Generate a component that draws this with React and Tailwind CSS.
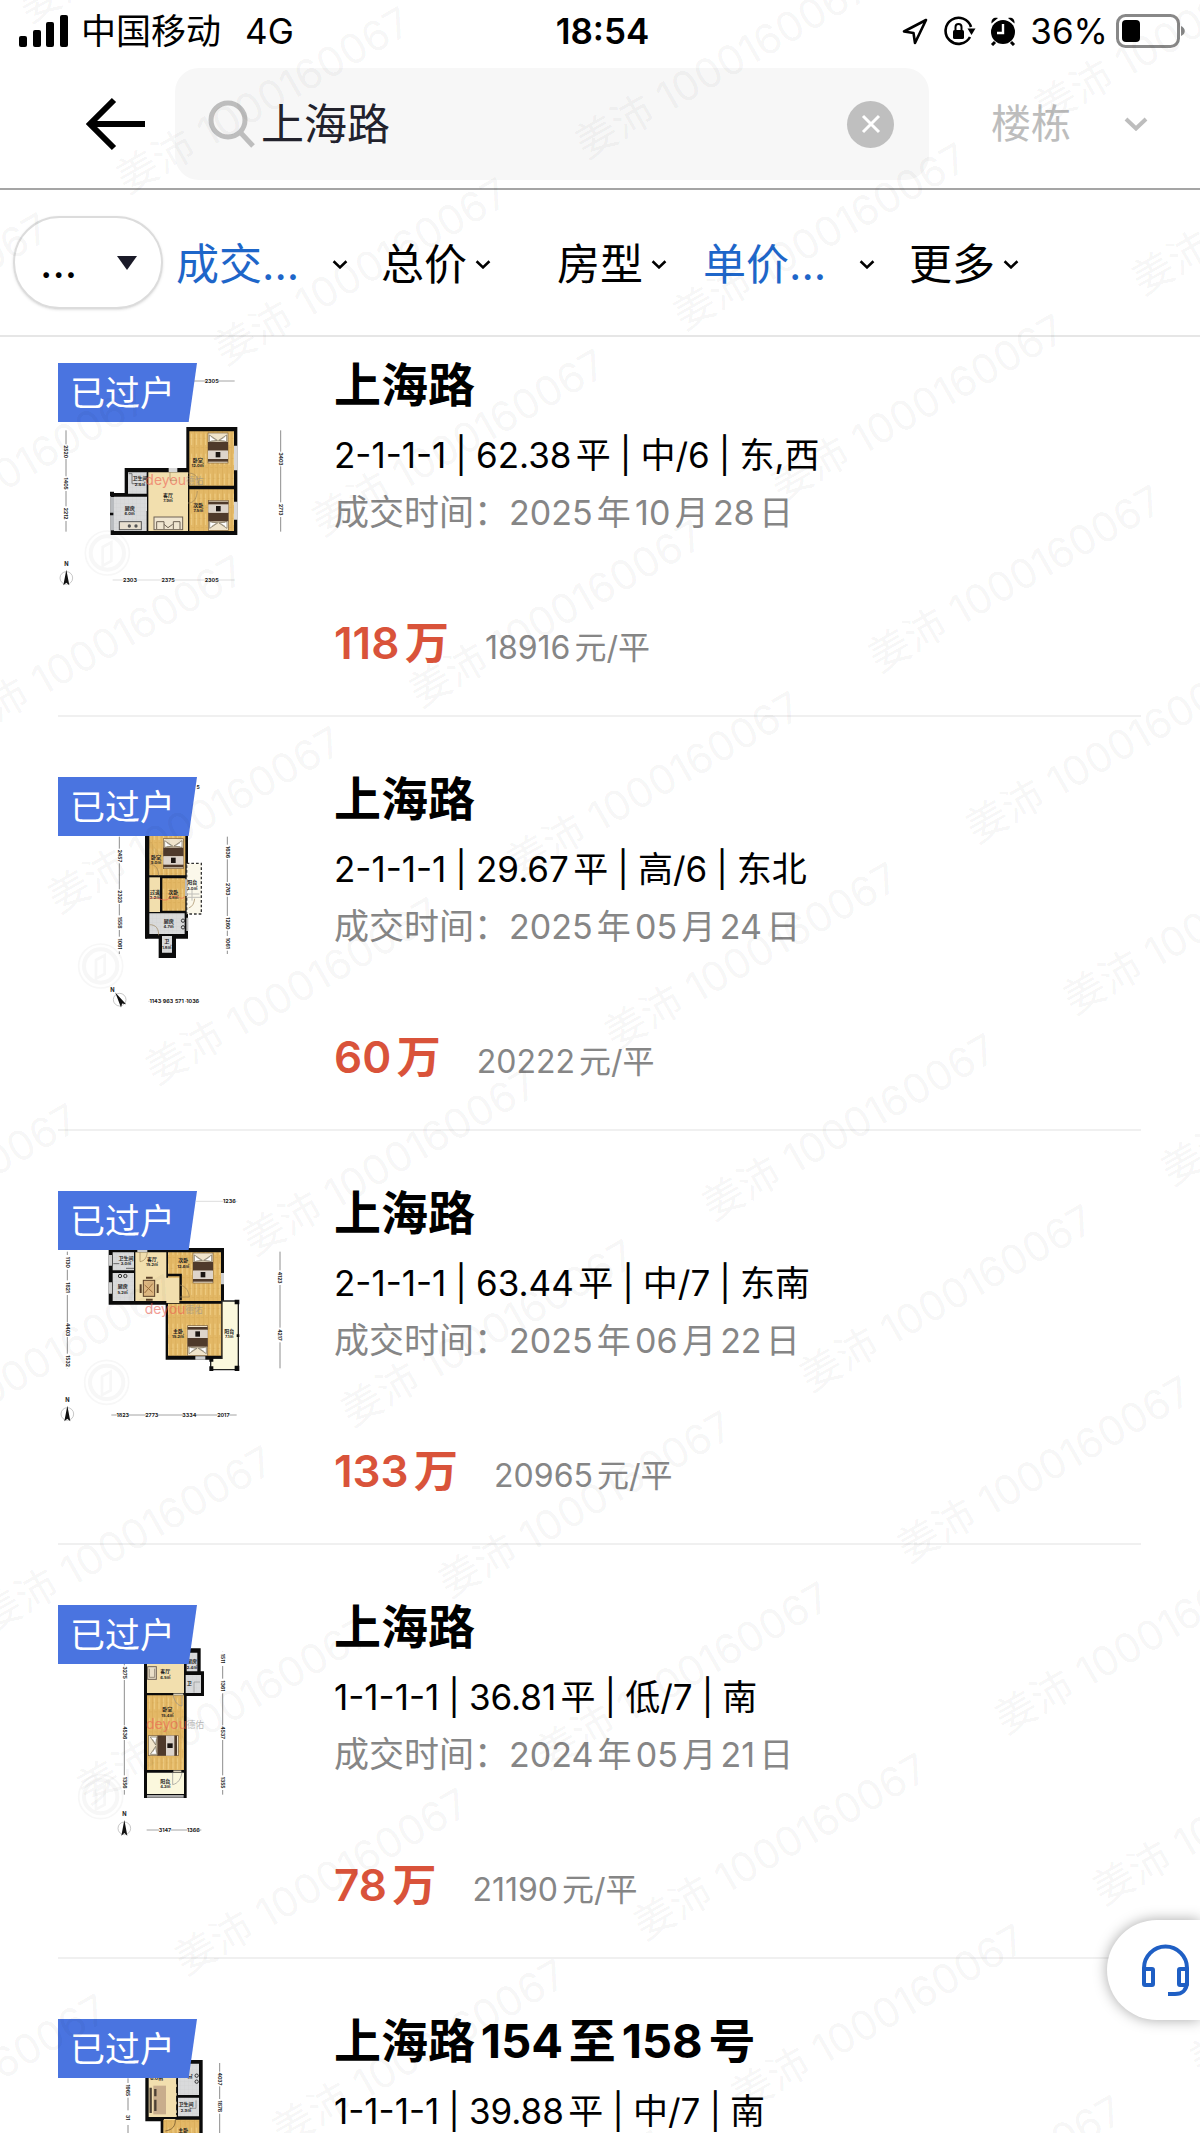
import React from "react";

const INK = "#0b0b0b";

function Chevron({ className }) {
  return (
    <svg viewBox="0 0 24 14" fill="none" stroke="currentColor" strokeWidth="4" className={className} aria-hidden="true">
      <path d="M2 2l10 9.5L22 2" />
    </svg>
  );
}

/* ---------- floor plan drawings ---------- */

function Defs({ id }) {
  return (
    <defs>
      <pattern id={`wood-${id}`} width="14" height="60" patternUnits="userSpaceOnUse">
        <rect width="14" height="60" fill="#e3b866" />
        <path d="M0 0v60" stroke="#cf9d49" strokeWidth="2" />
        <path d="M7 8v34" stroke="#efcd84" strokeWidth="3" />
        <path d="M0 22h7M7 50h7" stroke="#cf9d49" strokeWidth="1" />
      </pattern>
      <pattern id={`tile-${id}`} width="12" height="12" patternUnits="userSpaceOnUse">
        <rect width="12" height="12" fill="#d9dadb" />
        <path d="M0 0h12M0 0v12" stroke="#c4c7c9" strokeWidth="1" />
      </pattern>
    </defs>
  );
}

/* pillow end sits at the top; flip turns it round, side lays it on its left */
function Bed({ x, y, flip, side }) {
  const t = flip ? "rotate(180 30 45)" : side ? "rotate(-90 30 30)" : undefined;
  return (
    <g transform={`translate(${x} ${y})`}>
      <g transform={t}>
        <rect width="60" height="90" fill="#f0e4cb" stroke="#7a5f3c" strokeWidth="2" />
        <path d="M4 6l24 16L4 26zM56 6L32 22l24 4z" fill="#fff" stroke="#6d6350" strokeWidth="2" />
        <path d="M10 12l14 9M50 12l-14 9M10 24h40" stroke="#8f846d" strokeWidth="2" />
        <rect y="27" width="60" height="26" fill="#4f3a2b" />
        <rect y="53" width="60" height="25" fill="#ddd4cb" />
        <rect x="23" y="57" width="14" height="16" fill="#1b1512" />
        <rect y="78" width="60" height="8" fill="#4f3a2b" />
      </g>
    </g>
  );
}

function Mark({ x, y, children, size = 15, turn = 0 }) {
  return (
    <text
      x={x}
      y={y}
      fontSize={size}
      fontWeight="700"
      textAnchor="middle"
      fill="#222"
      transform={turn ? `rotate(${turn} ${x} ${y})` : undefined}
    >
      {children}
    </text>
  );
}

function Room({ x, y, name, area }) {
  return (
    <g>
      <Mark x={x} y={y}>{name}</Mark>
      <Mark x={x} y={y + 16} size={12}>{area}</Mark>
    </g>
  );
}

function DimV({ x, y1, y2, marks }) {
  return (
    <g>
      <path d={`M${x} ${y1}V${y2}`} stroke="#555" strokeWidth="2" />
      {marks.map(([y, label]) => (
        <g key={y}>
          <rect x={x - 8} y={y - 22} width="16" height="44" fill="#fff" />
          <Mark x={x - 5} y={y} turn={90}>{label}</Mark>
        </g>
      ))}
    </g>
  );
}

function DimH({ y, x1, x2, marks, tone = "#777" }) {
  return (
    <g>
      <path d={`M${x1} ${y}H${x2}`} stroke={tone} strokeWidth="2" />
      {marks.map(([x, label]) => (
        <g key={x}>
          <rect x={x - 18} y={y - 8} width="36" height="16" fill="#fff" />
          <Mark x={x} y={y + 6} size={16}>{label}</Mark>
        </g>
      ))}
    </g>
  );
}

function Compass({ x, y, turn = 0, nx = 0, ny = -36 }) {
  return (
    <g>
      <Mark x={x + nx} y={y + ny} size={17}>N</Mark>
      <circle cx={x} cy={y} r="19" fill="none" stroke="#aaa" strokeWidth="2" />
      <path d="M0 -25L9 22L0 14L-9 22Z" fill="#111" transform={`translate(${x} ${y}) rotate(${turn})`} />
    </g>
  );
}

function Seal({ x, y }) {
  return (
    <g fill="none" stroke="#f7f7f7">
      <circle cx={x} cy={y} r="66" strokeWidth="5" />
      <circle cx={x} cy={y} r="50" strokeWidth="12" />
      <path d={`M${x - 14} ${y - 18}l26 -14v56l-26 14z`} fill="#fff" strokeWidth="8" />
    </g>
  );
}

function Brand({ x, y }) {
  return (
    <g opacity="0.6">
      <text x={x} y={y} fontSize="42" fill="#ee5f52">deyou</text>
      <text x={x + 122} y={y - 2} fontSize="26" fill="#8c8c8c">德佑</text>
    </g>
  );
}

function Plan({ id, top, children }) {
  return (
    <svg
      viewBox={`54 ${top} 720 696`}
      className="h-[232px] w-[240px] font-['Inter','Noto_Sans_CJK_SC',sans-serif]"
      role="img"
      aria-label="户型图"
    >
      <Defs id={id} />
      {children}
    </svg>
  );
}

function PlanA() {
  return (
    <Plan id="a" top={36}>
      <Seal x={202} y={606} />
      <path d="M439 228H592V552H212V426H254V351H439Z" fill={INK} />
      <path d="M448 241H582V404H448ZM448 415H582V540H448Z" fill="url(#wood-a)" />
      <path d="M325 364H444V540H325Z" fill="#f2dfae" />
      <path d="M264 364H321V428H264ZM222 437H321V540H222Z" fill="url(#tile-a)" />
      <path d="M212 438h10v100h-10z" fill="#b9bcbf" />
      <path d="M210 485h10v8h-10zM210 422h12v14h-12z" fill={INK} />
      <path d="M582 284h11v74h-11zM582 452h11v54h-11zM386 351h26v12h-26z" fill="#d7d7d7" />
      <path d="M322 364v176" stroke={INK} strokeWidth="4" strokeDasharray="66 50" />
      <path d="M444 366c26 0 32 18 32 38M444 456c20 0 26-16 28-36M390 364v24h20" fill="none" stroke="#9b8258" strokeWidth="2" />
      <Bed x={504} y={246} />
      <Bed x={505} y={448} flip />
      <rect x="342" y="498" width="86" height="38" fill="#efe5d0" stroke="#6f6355" strokeWidth="3" />
      <path d="M350 534v-22h22v22M400 534v-22h20v22M372 520l12 10 14-10" fill="none" stroke="#6f6355" strokeWidth="3" />
      <rect x="238" y="512" width="66" height="24" fill="#e8dfcf" stroke="#555" strokeWidth="3" />
      <circle cx="268" cy="525" r="5" fill="#555" />
      <circle cx="288" cy="525" r="5" fill="#555" />
      <path d="M266 368h10v30h24" fill="none" stroke="#777" strokeWidth="3" />
      <Room x={473} y={332} name="卧室" area="12.0㎡" />
      <Room x={475} y={468} name="次卧" area="7.5㎡" />
      <Room x={384} y={438} name="客厅" area="7.9㎡" />
      <Room x={269} y={476} name="厨房" area="6.0㎡" />
      <Room x={300} y={388} name="卫生间" area="2.4㎡" />
      <Brand x={316} y={402} />
      <DimH y={90} x1={462} x2={584} marks={[[515, "2305"]]} />
      <DimV x={78} y1={238} y2={542} marks={[[302, "2520"], [398, "1405"], [488, "2212"]]} />
      <DimV x={722} y1={238} y2={542} marks={[[324, "3403"], [476, "2713"]]} />
      <DimH y={687} x1={218} x2={584} tone="#ccc" marks={[[270, "2303"], [384, "2375"], [515, "2305"]]} />
      <Compass x={79} y={681} />
    </Plan>
  );
}

function PlanB() {
  return (
    <Plan id="b" top={33}>
      <Seal x={182} y={600} />
      <path d="M318 190H444V518H408V576H356V518H318Z" fill={INK} />
      <path d="M328 200H436V328H328ZM367 337H436V434H367Z" fill="url(#wood-b)" />
      <path d="M328 334H360V438H328Z" fill="#f2dfae" />
      <path d="M328 442H434V504H328ZM366 510H396V560H366Z" fill="url(#tile-b)" />
      <path d="M440 292H484V444H440Z" fill="#fbf8ea" stroke="#333" strokeWidth="4" strokeDasharray="8 6" />
      <path d="M318 192V518" stroke={INK} strokeWidth="6" />
      <path d="M438 340v50M442 455v40" stroke="#bbb" strokeWidth="6" />
      <path d="M328 294c20 2 28 16 28 34M328 476c22 0 28 14 28 32M446 426c12-4 16-14 18-28" fill="none" stroke="#9b8258" strokeWidth="2" />
      <Bed x={370} y={218} />
      <circle cx="429" cy="464" r="5" fill="none" stroke="#333" strokeWidth="3" />
      <circle cx="429" cy="484" r="5" fill="none" stroke="#333" strokeWidth="3" />
      <Room x={348} y={278} name="卧室" area="9.0㎡" />
      <Room x={345} y={384} name="过道" area="2.2㎡" />
      <Room x={400} y={384} name="次卧" area="4.8㎡" />
      <Room x={457} y={355} name="阳台" area="3.0㎡" />
      <Room x={386} y={470} name="厨房" area="4.7㎡" />
      <Room x={380} y={532} name="卫" area="1.8㎡" />
      <path d="M330 398c20-12 40 16 60-2s30 12 44-4" fill="none" stroke="#ee5f52" strokeWidth="3" opacity="0.6" />
      <path d="M440 384h38M440 394h44M456 372v32" stroke="#999" strokeWidth="3" opacity="0.6" />
      <DimV x={238} y1={212} y2={564} marks={[[270, "2457"], [392, "2323"], [470, "1558"], [534, "1061"]]} />
      <DimV x={562} y1={212} y2={564} marks={[[258, "1636"], [370, "2763"], [472, "1260"], [532, "1061"]]} />
      <DimH y={706} x1={326} x2={478} marks={[[346, "1143"], [384, "963"], [418, "571"], [458, "1036"]]} />
      <Mark x={474} y={70}>5</Mark>
      <Compass x={239} y={701} turn={-32} nx={-22} ny={-24} />
    </Plan>
  );
}

function PlanC() {
  return (
    <Plan id="c" top={30}>
      <Seal x={200} y={604} />
      <path d="M206 201H552V536H377V371H206Z" fill={INK} />
      <path d="M546 360H595V566H512V532H546Z" fill="#fbf8dd" stroke="#222" strokeWidth="4" />
      <path d="M584 356h14v14h-14zM584 554h14v16h-14zM508 556h12v14h-12zM508 528h12v14h-12zM590 460h8v8h-8z" fill={INK} />
      <path d="M384 214H543V360H384ZM384 368H543V524H384Z" fill="url(#wood-c)" />
      <path d="M286 214H379V360H286ZM379 290H418V366H379Z" fill="#f2dfae" />
      <path d="M218 214H282V268H218ZM218 276H282V360H218Z" fill="url(#tile-c)" />
      <path d="M206 222h10v32h-10zM206 304h10v34h-10zM543 276h9v34h-9zM466 526h30v10h-30zM292 204h30v9h-30z" fill="#cfcfcf" />
      <path d="M384 282h38v76" fill="none" stroke={INK} strokeWidth="7" />
      <path d="M420 312c18 4 26 18 28 36h-28M300 214v28c14-2 20-12 22-28M546 368v156" fill="none" stroke="#9b8258" strokeWidth="2" />
      <Bed x={459} y={216} />
      <Bed x={443} y={434} flip />
      <rect x="310" y="298" width="34" height="48" fill="#dcb680" stroke="#5b4129" strokeWidth="3" />
      <path d="M302 310v26M353 310v26M318 290h20M318 356h20" stroke="#5b4129" strokeWidth="6" />
      <path d="M314 312l24 22M338 308l-24 28" stroke="#9a6d3d" strokeWidth="3" />
      <circle cx="240" cy="285" r="5" fill="none" stroke="#333" strokeWidth="3" />
      <circle cx="256" cy="285" r="5" fill="none" stroke="#333" strokeWidth="3" />
      <path d="M220 248h18M258 262h24" stroke="#666" strokeWidth="3" />
      <Room x={258} y={236} name="卫生间" area="3.0㎡" />
      <Room x={248} y={322} name="厨房" area="5.2㎡" />
      <Room x={336} y={240} name="客厅" area="15.2㎡" />
      <Room x={430} y={244} name="次卧" area="12.6㎡" />
      <Room x={414} y={456} name="主卧" area="15.2㎡" />
      <Room x={568} y={456} name="阳台" area="7.1㎡" />
      <Brand x={314} y={398} />
      <DimH y={61} x1={468} x2={592} tone="#ccc" marks={[[568, "1236"]]} />
      <DimV x={82} y1={212} y2={562} marks={[[244, "1130"], [320, "1821"], [446, "4403"], [540, "1532"]]} />
      <DimV x={720} y1={212} y2={562} marks={[[290, "4123"], [462, "4217"]]} />
      <DimH y={702} x1={214} x2={590} marks={[[248, "1823"], [335, "2773"], [448, "3334"], [550, "2017"]]} />
      <Compass x={82} y={699} />
    </Plan>
  );
}

function PlanD() {
  return (
    <Plan id="d" top={29}>
      <Seal x={182} y={604} />
      <path d="M312 159H482V228H492V302H440V608H312Z" fill={INK} />
      <path d="M321 170H432V293H321Z" fill="#f2dfae" />
      <path d="M440 172H472V228H440ZM437 239H483V293H437Z" fill="url(#tile-d)" />
      <path d="M321 300H432V524H321Z" fill="url(#wood-d)" />
      <path d="M321 532H432V596H321Z" fill="#fbf8dd" />
      <path d="M321 603h110" stroke="#a9a9a9" strokeWidth="8" />
      <path d="M400 297h30M400 528h24" stroke="#d8cfb8" strokeWidth="5" />
      <path d="M400 300c4 20 12 30 26 32v-32M398 532v36c16-4 24-16 28-36M462 292v-32h18" fill="none" stroke="#8f8f8f" strokeWidth="2" />
      <rect x="323" y="214" width="26" height="38" fill="#e9dfc8" stroke="#6f6355" strokeWidth="3" />
      <path d="M328 220v26h16v-26" fill="none" stroke="#6f6355" strokeWidth="2" />
      <Bed x={325} y={421} side />
      <Room x={376} y={234} name="客厅" area="6.5㎡" />
      <Room x={382} y={348} name="卧室" area="15.4㎡" />
      <Room x={376} y={562} name="阳台" area="4.3㎡" />
      <Room x={456} y={204} name="厨房" area="2.4㎡" />
      <Mark x={448} y={270}>卫</Mark>
      <Brand x={318} y={400} />
      <DimV x={253} y1={206} y2={598} marks={[[232, "3275"], [412, "4536"], [562, "1356"]]} />
      <DimV x={548} y1={168} y2={598} marks={[[190, "1511"], [272, "1361"], [412, "4537"], [562, "1355"]]} />
      <DimH y={704} x1={320} x2={484} marks={[[375, "3147"], [460, "1366"]]} />
      <Compass x={253} y={699} />
    </Plan>
  );
}

function PlanE() {
  return (
    <Plan id="e" top={42}>
      <path d="M316 165H488V520H362V349H316Z" fill={INK} />
      <path d="M326 176H410V336H326ZM372 342H406V350H372Z" fill="#f2dfae" />
      <path d="M414 176H477V270H414ZM414 278H477V334H414Z" fill="url(#tile-e)" />
      <path d="M370 344H478V510H370Z" fill="url(#wood-e)" />
      <rect x="340" y="242" width="38" height="86" fill="#c8ad8c" />
      <path d="M332 248v76M346 252v22M346 284v34" stroke="#4c4034" strokeWidth="7" />
      <path d="M410 220v110" stroke={INK} strokeWidth="3" strokeDasharray="18 8" />
      <path d="M376 378c22-4 30-14 30-34" fill="none" stroke="#8b6b39" strokeWidth="3" />
      <circle cx="470" cy="212" r="5" fill="none" stroke="#333" strokeWidth="3" />
      <circle cx="470" cy="230" r="5" fill="none" stroke="#333" strokeWidth="3" />
      <path d="M448 310h20v-24" fill="none" stroke="#777" strokeWidth="2" />
      <Room x={438} y={304} name="卫生间" area="2.9㎡" />
      <Mark x={350} y={226}>6.0㎡</Mark>
      <Mark x={438} y={220}>3.8㎡</Mark>
      <Mark x={430} y={380}>主卧</Mark>
      <DimV x={264} y1={220} y2={500} marks={[[256, "1965"], [338, "31"]]} />
      <DimV x={539} y1={174} y2={500} marks={[[222, "4037"], [304, "1878"]]} />
    </Plan>
  );
}

/* ---------- page parts ---------- */

function StatusBar() {
  return (
    <div className="grid h-[62px] shrink-0 grid-cols-3 items-center pr-[14px] pl-[19px] text-[35px] leading-none">
      <div className="flex items-center">
        <svg viewBox="0 0 50 32" className="h-8 w-[50px]" fill="#000" aria-hidden="true">
          <rect x="0" y="21" width="8" height="11" rx="2" />
          <rect x="14" y="15" width="8" height="17" rx="2" />
          <rect x="27" y="7" width="8" height="25" rx="2" />
          <rect x="41" y="0" width="8" height="32" rx="2" />
        </svg>
        <span className="ml-3">中国移动</span>
        <span className="ml-6">4G</span>
      </div>
      <div className="text-center font-semibold">18:54</div>
      <div className="flex items-center justify-end">
        <svg viewBox="0 0 26 28" className="h-7 w-[26px]" fill="none" stroke="#000" strokeWidth="2.6" strokeLinejoin="round" aria-hidden="true">
          <path d="M24 3L2 14.5l9.5 1.5L13 26z" />
        </svg>
        <svg viewBox="0 0 32 30" className="ml-4 h-[30px] w-8" fill="none" stroke="#000" strokeWidth="2.6" aria-hidden="true">
          <path d="M27 11A13 13 0 1 0 26 21" />
          <path d="M23.500 12.500h8L27.500 19z" fill="#000" stroke="none" />
          <rect x="9" y="14" width="11" height="9" rx="1.500" fill="#000" stroke="none" />
          <path d="M11.500 14v-3a3 3 0 0 1 6 0v3" strokeWidth="2" />
        </svg>
        <svg viewBox="0 0 26 30" className="ml-[14px] h-[30px] w-[26px]" aria-hidden="true">
          <circle cx="13" cy="16" r="12" fill="#000" />
          <path d="M1.500 7.500C1 3 4 1 8 2zM24.500 7.500C25 3 22 1 18 2z" fill="#000" />
          <path d="M5 26l-3 3M21 26l3 3" stroke="#000" strokeWidth="3" />
          <path d="M13 8v9H7" fill="none" stroke="#fff" strokeWidth="2.4" />
        </svg>
        <span className="ml-[14px]">36%</span>
        <svg viewBox="0 0 70 34" className="ml-2 h-[34px] w-[70px]" aria-hidden="true">
          <rect x="1.500" y="1.500" width="61" height="31" rx="8" fill="none" stroke="#888" strokeWidth="3" />
          <rect x="6" y="6" width="18" height="22" rx="4" fill="#000" />
          <path d="M65 12c5 2 5 8 0 10z" fill="#888" />
        </svg>
      </div>
    </div>
  );
}

function SearchHeader() {
  return (
    <header className="flex h-[128px] shrink-0 items-center border-b-2 border-[#a5a5a5] pb-[2px] pl-[85px]">
      <button type="button" aria-label="返回" className="shrink-0">
        <svg viewBox="0 0 62 54" className="h-[54px] w-[62px]" fill="none" stroke="#000" strokeWidth="6" aria-hidden="true">
          <path d="M29 3L5 27l24 24M5 27h55" />
        </svg>
      </button>
      <form className="ml-7 flex h-28 min-w-0 flex-1 items-center rounded-3xl bg-[#f7f7f7] pr-[35px] pl-8" onSubmit={(e) => e.preventDefault()}>
        <svg viewBox="0 0 50 50" className="h-[50px] w-[50px] shrink-0" fill="none" stroke="#bdbdbd" strokeWidth="5" aria-hidden="true">
          <circle cx="21" cy="21" r="17" />
          <path d="M33 33l13 14" />
        </svg>
        <input
          type="text"
          aria-label="搜索小区"
          defaultValue="上海路"
          className="ml-1 h-16 min-w-0 flex-1 bg-transparent text-[43px] text-[#22222c] outline-none"
        />
        <button type="button" aria-label="清除" className="flex h-[47px] w-[47px] shrink-0 items-center justify-center rounded-full bg-[#bfbfbf]">
          <svg viewBox="0 0 20 20" className="h-5 w-5" fill="none" stroke="#fff" strokeWidth="3" aria-hidden="true">
            <path d="M2 2l16 16M18 2L2 18" />
          </svg>
        </button>
      </form>
      <button type="button" className="mr-[52px] ml-[62px] flex shrink-0 items-center text-[40px] text-[#bdbdbd]">
        楼栋
        <Chevron className="ml-[53px] h-[14px] w-6" />
      </button>
    </header>
  );
}

const FILTERS = [
  { label: "成交...", active: true },
  { label: "总价" },
  { label: "房型" },
  { label: "单价...", active: true },
  { label: "更多" },
];

function FilterBar() {
  return (
    <nav aria-label="筛选" className="flex h-[147px] shrink-0 items-center border-b-2 border-[#e6e6e6] pl-[13px]">
      <button
        type="button"
        aria-label="排序"
        className="flex h-[93px] w-[150px] shrink-0 items-center justify-between rounded-full border-2 border-[#dcdcdc] pr-[23px] pl-[25px] shadow-sm"
      >
        <span className="text-[43px] leading-none">...</span>
        <svg viewBox="0 0 22 14" className="h-[14px] w-[22px]" fill="#1a1a28" aria-hidden="true">
          <path d="M1 0h20L11 14z" />
        </svg>
      </button>
      <div className="ml-[13px] grid flex-1 grid-cols-[205fr_176fr_146fr_206fr_291fr] pt-1">
        {FILTERS.map((f) => (
          <button key={f.label} type="button" className="flex items-center text-[43px]">
            <span className={f.active ? "w-[128px] text-left whitespace-nowrap text-[#1e66c9]" : "whitespace-nowrap"}>{f.label}</span>
            <Chevron className={f.active ? "ml-7 h-[9px] w-4" : "ml-2 h-[9px] w-4"} />
          </button>
        ))}
      </div>
    </nav>
  );
}

const DEALS = [
  { title: "上海路", info: ["2-1-1-1", "62.38平", "中/6", "东,西"], date: "2025年10月28日", total: "118万", unit: "18916元/平", Plan: PlanA },
  { title: "上海路", info: ["2-1-1-1", "29.67平", "高/6", "东北"], date: "2025年05月24日", total: "60万", unit: "20222元/平", Plan: PlanB },
  { title: "上海路", info: ["2-1-1-1", "63.44平", "中/7", "东南"], date: "2025年06月22日", total: "133万", unit: "20965元/平", Plan: PlanC },
  { title: "上海路", info: ["1-1-1-1", "36.81平", "低/7", "南"], date: "2024年05月21日", total: "78万", unit: "21190元/平", Plan: PlanD },
  { title: "上海路154至158号", info: ["1-1-1-1", "39.88平", "中/7", "南"], Plan: PlanE },
];

function DealCard({ deal }) {
  return (
    <li className="flex border-b-2 border-[#f0f0f0] pt-[60px] pb-[37px] first:pt-[26px]">
      <div className="relative w-60 shrink-0">
        <deal.Plan />
        <span className="absolute top-0 left-0 flex h-[59px] w-[139px] items-center bg-[#4a74e0] pt-[2px] pl-3 text-[35px] leading-none text-white [clip-path:polygon(0_0,100%_0,94%_100%,0_100%)]">
          已过户
        </span>
      </div>
      <div className="ml-9 flex min-w-0 flex-1 flex-col [text-autospace:normal]">
        <h2 className="text-[47px] leading-[44px] font-bold whitespace-nowrap">{deal.title}</h2>
        <p className="mt-[23px] flex gap-[9px] text-[35px] leading-[50px] whitespace-nowrap">
          {deal.info.map((part, i) => (
            <React.Fragment key={i}>
              {i > 0 && <span>|</span>}
              <span>{part}</span>
            </React.Fragment>
          ))}
        </p>
        {deal.date && (
          <p className="mt-2 text-[34px] leading-[48px] whitespace-nowrap text-[#868686]">
            <span className="text-[35px]">成交时间：</span>
            {deal.date}
          </p>
        )}
        {deal.total && (
          <p className="mt-[76px] flex items-baseline leading-[60px] whitespace-nowrap">
            <strong className="text-[44px] font-semibold text-[#d9533a]">{deal.total}</strong>
            <span className="ml-9 text-[32px] text-[#868686]">{deal.unit}</span>
          </p>
        )}
      </div>
    </li>
  );
}

function Watermark() {
  return (
    <div className="pointer-events-none absolute inset-0 overflow-hidden select-none" aria-hidden="true">
      <div className="grid w-[2496px] origin-top-left [transform:rotate(-29.7deg)_translate(-1234px,-78px)] grid-cols-6">
        {Array.from({ length: 78 }, (_, i) => (
          <span key={i} className="flex h-[197px] items-center text-[41px] whitespace-nowrap text-black/5">
            姜沛 1000160067
          </span>
        ))}
      </div>
    </div>
  );
}

export default function App() {
  return (
    <div className="relative flex h-screen flex-col overflow-hidden bg-white font-['Inter','Noto_Sans_CJK_SC',sans-serif] text-black">
      <StatusBar />
      <SearchHeader />
      <FilterBar />
      <main className="min-h-0 flex-1 overflow-y-auto [scrollbar-width:none]">
        <ul className="mr-[59px] ml-[58px]">
          {DEALS.map((deal, i) => (
            <DealCard key={i} deal={deal} />
          ))}
        </ul>
      </main>
      <Watermark />
      <button
        type="button"
        aria-label="在线客服"
        className="absolute right-0 bottom-[113px] flex h-[100px] w-[93px] items-center rounded-l-full bg-white pl-[34px] shadow-[0_0_14px_rgba(0,0,0,0.35)]"
      >
        <svg viewBox="0 0 50 54" className="h-[54px] w-[50px]" fill="none" stroke="#1f5fc4" strokeWidth="4" aria-hidden="true">
          <path d="M3 28v-3a21 21 0 0 1 43 0v14c0 8-5 12-12 12h-7" />
          <rect x="3" y="26" width="9" height="16" rx="1" />
          <rect x="38" y="26" width="8" height="16" rx="1" />
        </svg>
      </button>
    </div>
  );
}
